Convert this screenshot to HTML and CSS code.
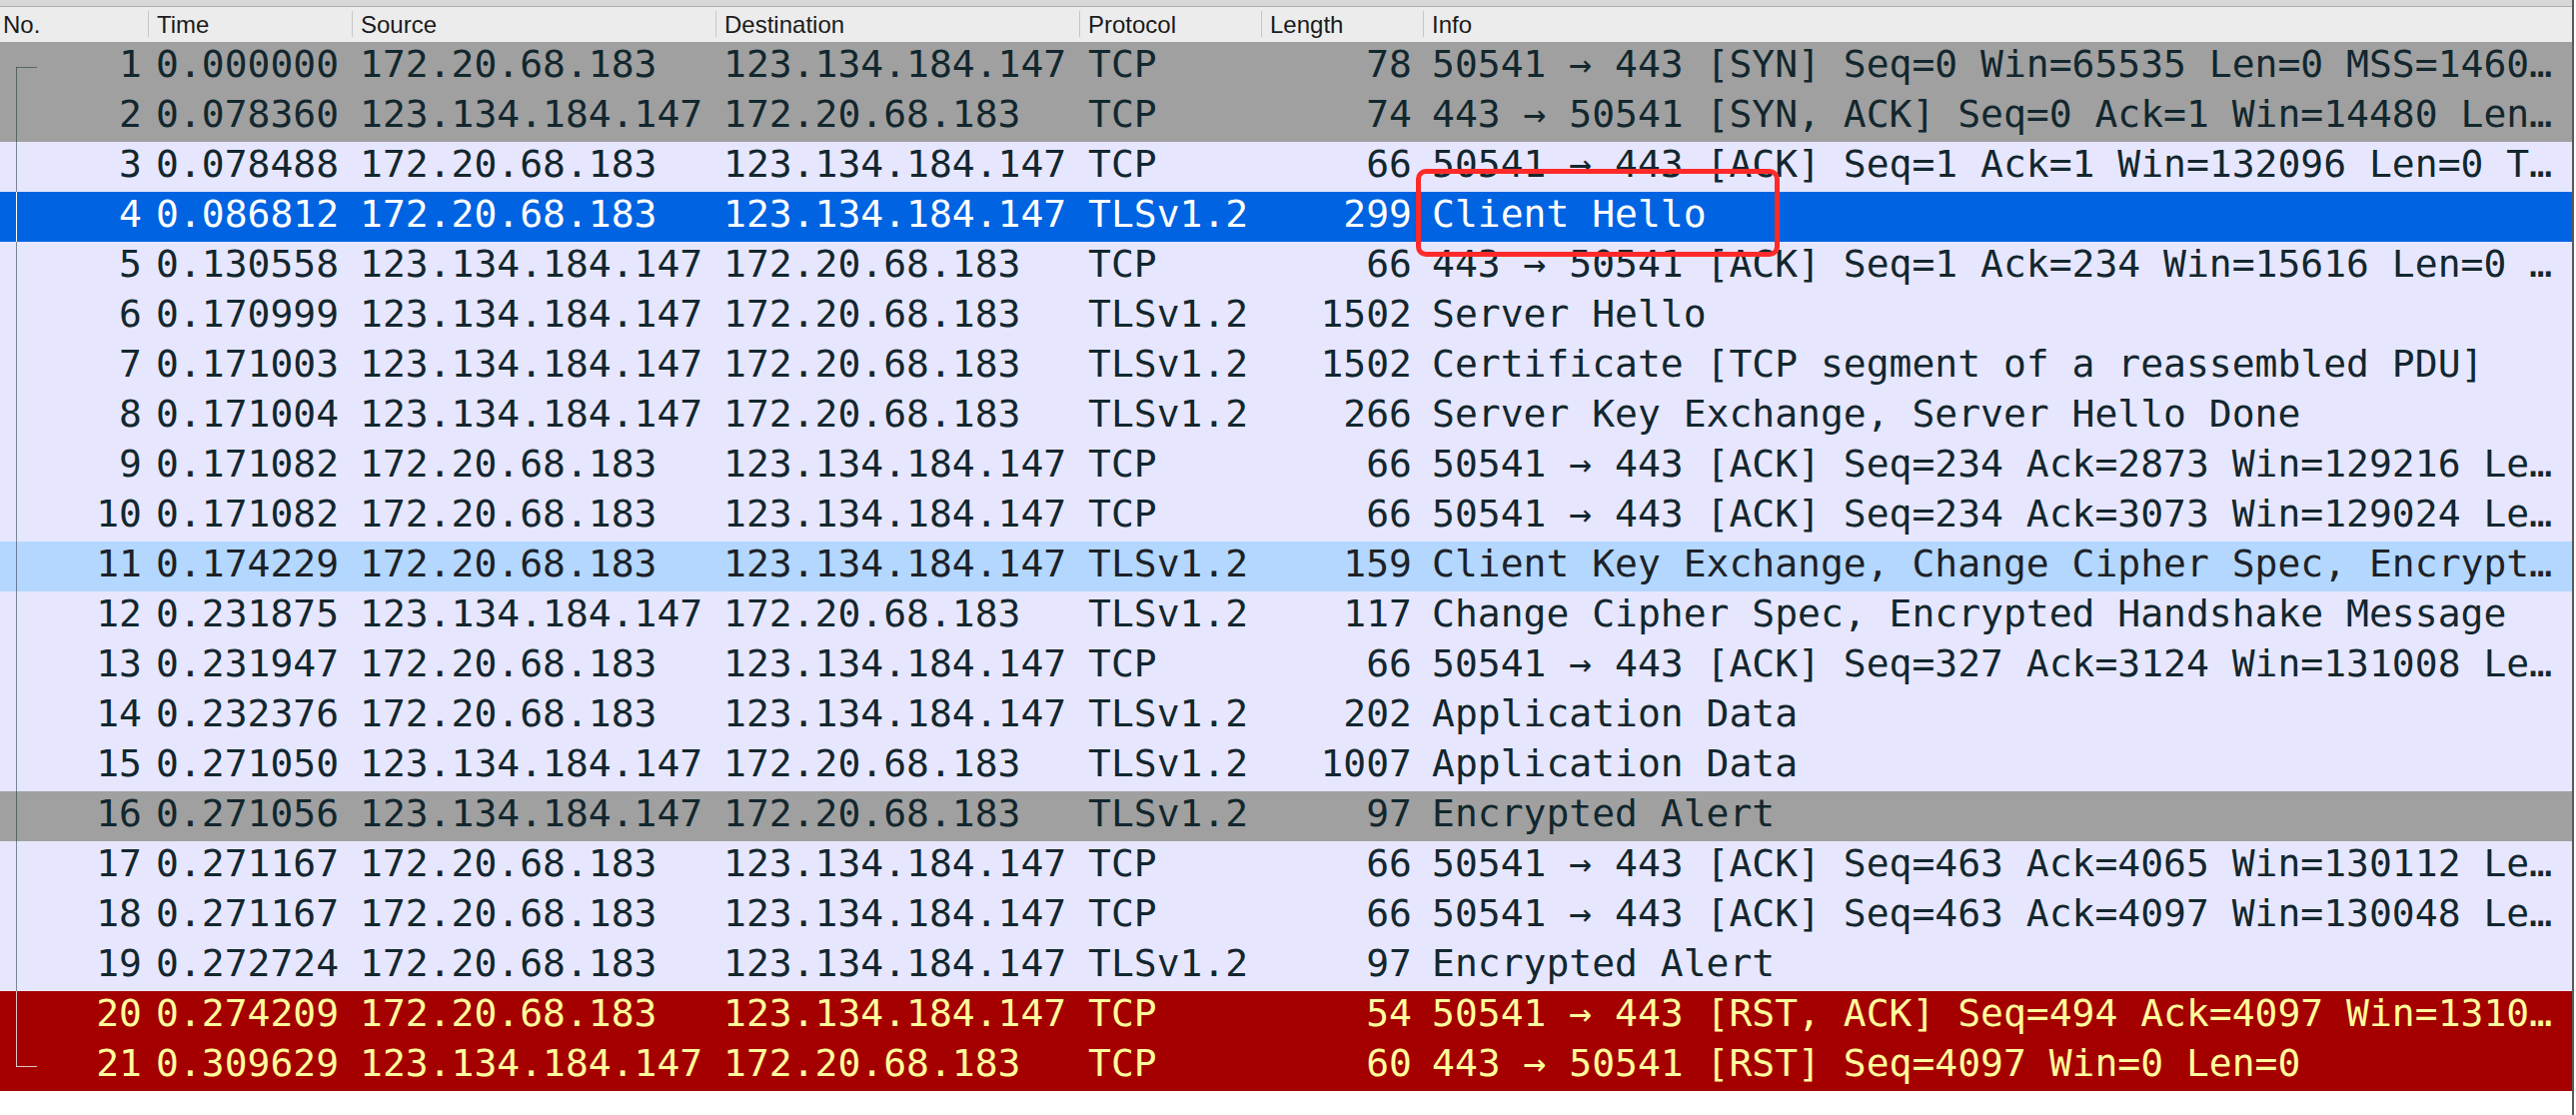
FILE: index.html
```html
<!DOCTYPE html>
<html>
<head>
<meta charset="utf-8">
<link rel="stylesheet" href="styles.css">
</head>
<body>
<div class="pane">
  <div class="topstrip"></div>
  <div class="header">
    <div class="hcell first">No.</div>
    <div class="hcell">Time</div>
    <div class="hcell">Source</div>
    <div class="hcell">Destination</div>
    <div class="hcell">Protocol</div>
    <div class="hcell">Length</div>
    <div class="hcell">Info</div>
  </div>
  <div class="rows">
    <div class="row synfin"><div class="c no tree-start">1</div><div class="c">0.000000</div><div class="c">172.20.68.183</div><div class="c">123.134.184.147</div><div class="c">TCP</div><div class="c len">78</div><div class="c">50541 → 443 [SYN] Seq=0 Win=65535 Len=0 MSS=1460…</div></div>
    <div class="row synfin"><div class="c no tree-mid">2</div><div class="c">0.078360</div><div class="c">123.134.184.147</div><div class="c">172.20.68.183</div><div class="c">TCP</div><div class="c len">74</div><div class="c">443 → 50541 [SYN, ACK] Seq=0 Ack=1 Win=14480 Len…</div></div>
    <div class="row tcp"><div class="c no tree-mid">3</div><div class="c">0.078488</div><div class="c">172.20.68.183</div><div class="c">123.134.184.147</div><div class="c">TCP</div><div class="c len">66</div><div class="c">50541 → 443 [ACK] Seq=1 Ack=1 Win=132096 Len=0 T…</div></div>
    <div class="row selected"><div class="c no tree-mid">4</div><div class="c">0.086812</div><div class="c">172.20.68.183</div><div class="c">123.134.184.147</div><div class="c">TLSv1.2</div><div class="c len">299</div><div class="c">Client Hello</div></div>
    <div class="row tcp"><div class="c no tree-mid">5</div><div class="c">0.130558</div><div class="c">123.134.184.147</div><div class="c">172.20.68.183</div><div class="c">TCP</div><div class="c len">66</div><div class="c">443 → 50541 [ACK] Seq=1 Ack=234 Win=15616 Len=0 …</div></div>
    <div class="row tcp"><div class="c no tree-mid">6</div><div class="c">0.170999</div><div class="c">123.134.184.147</div><div class="c">172.20.68.183</div><div class="c">TLSv1.2</div><div class="c len">1502</div><div class="c">Server Hello</div></div>
    <div class="row tcp"><div class="c no tree-mid">7</div><div class="c">0.171003</div><div class="c">123.134.184.147</div><div class="c">172.20.68.183</div><div class="c">TLSv1.2</div><div class="c len">1502</div><div class="c">Certificate [TCP segment of a reassembled PDU]</div></div>
    <div class="row tcp"><div class="c no tree-mid">8</div><div class="c">0.171004</div><div class="c">123.134.184.147</div><div class="c">172.20.68.183</div><div class="c">TLSv1.2</div><div class="c len">266</div><div class="c">Server Key Exchange, Server Hello Done</div></div>
    <div class="row tcp"><div class="c no tree-mid">9</div><div class="c">0.171082</div><div class="c">172.20.68.183</div><div class="c">123.134.184.147</div><div class="c">TCP</div><div class="c len">66</div><div class="c">50541 → 443 [ACK] Seq=234 Ack=2873 Win=129216 Le…</div></div>
    <div class="row tcp"><div class="c no tree-mid">10</div><div class="c">0.171082</div><div class="c">172.20.68.183</div><div class="c">123.134.184.147</div><div class="c">TCP</div><div class="c len">66</div><div class="c">50541 → 443 [ACK] Seq=234 Ack=3073 Win=129024 Le…</div></div>
    <div class="row hover"><div class="c no tree-mid">11</div><div class="c">0.174229</div><div class="c">172.20.68.183</div><div class="c">123.134.184.147</div><div class="c">TLSv1.2</div><div class="c len">159</div><div class="c">Client Key Exchange, Change Cipher Spec, Encrypt…</div></div>
    <div class="row tcp"><div class="c no tree-mid">12</div><div class="c">0.231875</div><div class="c">123.134.184.147</div><div class="c">172.20.68.183</div><div class="c">TLSv1.2</div><div class="c len">117</div><div class="c">Change Cipher Spec, Encrypted Handshake Message</div></div>
    <div class="row tcp"><div class="c no tree-mid">13</div><div class="c">0.231947</div><div class="c">172.20.68.183</div><div class="c">123.134.184.147</div><div class="c">TCP</div><div class="c len">66</div><div class="c">50541 → 443 [ACK] Seq=327 Ack=3124 Win=131008 Le…</div></div>
    <div class="row tcp"><div class="c no tree-mid">14</div><div class="c">0.232376</div><div class="c">172.20.68.183</div><div class="c">123.134.184.147</div><div class="c">TLSv1.2</div><div class="c len">202</div><div class="c">Application Data</div></div>
    <div class="row tcp"><div class="c no tree-mid">15</div><div class="c">0.271050</div><div class="c">123.134.184.147</div><div class="c">172.20.68.183</div><div class="c">TLSv1.2</div><div class="c len">1007</div><div class="c">Application Data</div></div>
    <div class="row synfin"><div class="c no tree-mid">16</div><div class="c">0.271056</div><div class="c">123.134.184.147</div><div class="c">172.20.68.183</div><div class="c">TLSv1.2</div><div class="c len">97</div><div class="c">Encrypted Alert</div></div>
    <div class="row tcp"><div class="c no tree-mid">17</div><div class="c">0.271167</div><div class="c">172.20.68.183</div><div class="c">123.134.184.147</div><div class="c">TCP</div><div class="c len">66</div><div class="c">50541 → 443 [ACK] Seq=463 Ack=4065 Win=130112 Le…</div></div>
    <div class="row tcp"><div class="c no tree-mid">18</div><div class="c">0.271167</div><div class="c">172.20.68.183</div><div class="c">123.134.184.147</div><div class="c">TCP</div><div class="c len">66</div><div class="c">50541 → 443 [ACK] Seq=463 Ack=4097 Win=130048 Le…</div></div>
    <div class="row tcp"><div class="c no tree-mid">19</div><div class="c">0.272724</div><div class="c">172.20.68.183</div><div class="c">123.134.184.147</div><div class="c">TLSv1.2</div><div class="c len">97</div><div class="c">Encrypted Alert</div></div>
    <div class="row rst"><div class="c no tree-mid">20</div><div class="c">0.274209</div><div class="c">172.20.68.183</div><div class="c">123.134.184.147</div><div class="c">TCP</div><div class="c len">54</div><div class="c">50541 → 443 [RST, ACK] Seq=494 Ack=4097 Win=1310…</div></div>
    <div class="row rst"><div class="c no tree-end">21</div><div class="c">0.309629</div><div class="c">123.134.184.147</div><div class="c">172.20.68.183</div><div class="c">TCP</div><div class="c len">60</div><div class="c">443 → 50541 [RST] Seq=4097 Win=0 Len=0</div></div>
  </div>
  <div class="highlight-box"></div>
</div>
</body>
</html>
```

FILE: styles.css
```css
html, body {
  margin: 0;
  padding: 0;
  background: #ffffff;
}

.pane {
  position: relative;
  width: 2574px;
  height: 1116px;
  border-right: 2px solid #5a5a5a;
  background: #ffffff;
}

.topstrip {
  height: 6px;
  background: #d7d7d7;
  border-bottom: 1px solid #adadad;
}

.header {
  display: grid;
  grid-template-columns: 148px 204px 364px 364px 182px 162px 1150px;
  height: 35px;
  background: #ececec;
  font-family: "Liberation Sans", Arial, sans-serif;
  font-size: 24px;
  color: #1b1b1b;
}

.hcell {
  position: relative;
  line-height: 35px;
  padding-left: 9px;
  white-space: nowrap;
  overflow: hidden;
}

.hcell.first {
  padding-left: 3px;
}

.header .hcell:not(.first)::before {
  content: "";
  position: absolute;
  left: 0;
  top: 4px;
  bottom: 5px;
  width: 1px;
  background: #c6c6c6;
}

.rows {
  font-family: "DejaVu Sans Mono", "Liberation Mono", monospace;
  font-size: 38px;
}

.row {
  display: grid;
  grid-template-columns: 148px 204px 364px 364px 182px 162px 1150px;
  height: 50px;
  color: #12272e;
}

.c {
  position: relative;
  line-height: 44px;
  height: 50px;
  box-sizing: border-box;
  padding: 0 6px 6px 8px;
  white-space: pre;
  overflow: hidden;
}

.c.no {
  text-align: right;
  padding-right: 6px;
}

.c.len {
  text-align: right;
  padding-right: 11px;
}

.row .c:nth-child(5) { padding-left: 9px; }
.row .c:nth-child(7) { padding-left: 9px; }

.row.synfin { background: #a0a0a0; }
.row.tcp { background: #e7e6ff; }
.row.selected { background: #0063e1; color: #ffffff; }
.row.hover { background: #b3d7ff; color: #1d2127; }
.row.rst { background: #a40000; color: #fffc9c; }

/* related-packet tree line in the No. column */
.tree-start::before,
.tree-mid::before,
.tree-end::before {
  content: "";
  position: absolute;
  left: 16px;
  width: 1px;
  background: currentColor;
  opacity: 0.5;
}

.tree-start::before { top: 25px; bottom: 0; }
.tree-mid::before { top: 0; bottom: 0; }
.tree-end::before { top: 0; height: 26px; }

.tree-start::after,
.tree-end::after {
  content: "";
  position: absolute;
  left: 16px;
  top: 25px;
  width: 21px;
  height: 1px;
  background: currentColor;
  opacity: 0.5;
}

.row.selected .tree-mid::before { opacity: 1; }
.row.rst .tree-mid::before,
.row.rst .tree-end::before,
.row.rst .tree-end::after { opacity: 0.85; background: #e8e8e8; }

.highlight-box {
  position: absolute;
  left: 1417px;
  top: 169px;
  width: 364px;
  height: 88px;
  box-sizing: border-box;
  border: 5px solid #fe2a2a;
  border-radius: 10px;
}
```
